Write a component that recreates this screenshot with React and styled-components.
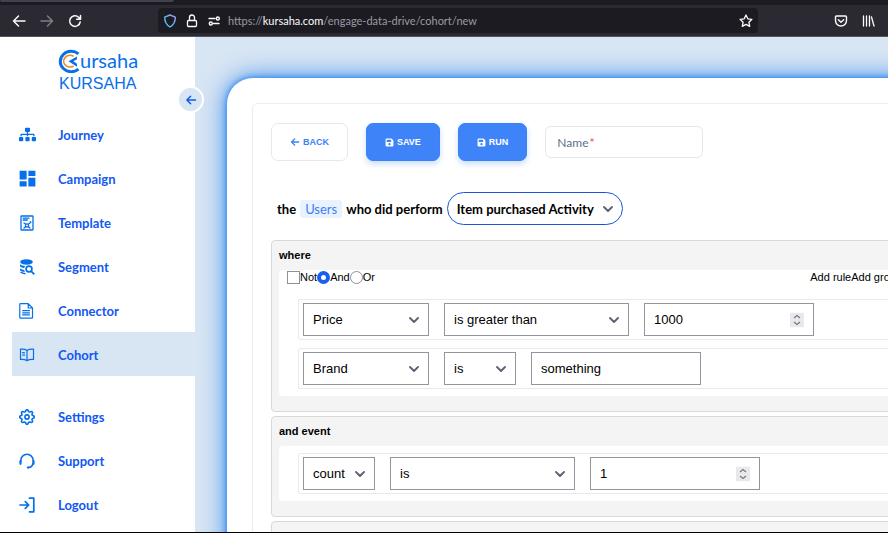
import React from "react";
import styled, { createGlobalStyle, css } from "styled-components";
import { FaSitemap, FaSave } from "react-icons/fa";
import { MdDashboard } from "react-icons/md";

const Global = createGlobalStyle`
  *, *::before, *::after { box-sizing: border-box; }
  body { margin: 0; background: #000; font-family: "Liberation Sans", Arial, sans-serif; }
  button, input, select { font: inherit; margin: 0; }
`;

const blue = "#0570ea";
const linkBlue = "#1258f2";

const Screen = styled.div`
  display: flex;
  flex-direction: column;
  height: 100vh;
  overflow: hidden;
  border-bottom: 1px solid #000;
`;

/* Browser chrome */
const TabStrip = styled.div`
  flex: none;
  height: 5px;
  background: #1c1b22;
`;
const ActiveTab = styled.div`
  width: 174px;
  height: 2px;
  border-radius: 0 0 3px 3px;
  background: #42414d;
`;
const Toolbar = styled.header`
  flex: none;
  display: flex;
  align-items: center;
  height: 32px;
  padding: 0 11px;
  background: #2b2a33;
  border-bottom: 1px solid #55545f;
  color: #fbfbfe;
`;
const ToolGroup = styled.div`
  display: flex;
  gap: 12px;
`;
const ToolButton = styled.button`
  display: flex;
  align-items: center;
  justify-content: center;
  width: 16px;
  height: 16px;
  padding: 0;
  border: 0;
  background: none;
  color: inherit;
  opacity: ${(p) => (p.disabled ? 0.4 : 1)};
`;
const NavGroup = styled(ToolGroup)`
  width: 147px;
`;
const AddressBar = styled.div`
  flex: 1;
  display: flex;
  align-items: center;
  gap: 6px;
  height: 25px;
  padding: 0 4px;
  border-radius: 4px;
  background: #1c1b22;
`;
const Address = styled.span`
  flex: 1;
  color: #9a9aa3;
  font: 11px/16px Lato, sans-serif;
  b { color: #fbfbfe; font-weight: 400; }
`;
const EndGroup = styled(ToolGroup)`
  justify-content: flex-end;
  width: 119px;
`;

/* App shell */
const Shell = styled.div`
  flex: 1;
  display: flex;
  min-height: 0;
  background: #d8e5f3;
`;
const Sidebar = styled.aside`
  position: relative;
  z-index: 1;
  flex: none;
  display: flex;
  flex-direction: column;
  width: 195px;
  padding: 11px 0 0 12px;
  background: #fff;
`;
const Brand = styled.div`
  display: flex;
  flex-direction: column;
  height: 64px;
  padding-left: 44px;
  color: ${blue};
`;
const Wordmark = styled.div`
  display: flex;
  align-items: center;
  height: 25px;
  font: 20px/25px Lato, sans-serif;
`;
const BrandName = styled.div`
  padding-left: 3px;
  font-size: 16px;
  line-height: 22px;
`;
const Collapse = styled.button`
  position: absolute;
  top: 49px;
  right: -9px;
  display: flex;
  align-items: center;
  justify-content: center;
  width: 27px;
  height: 27px;
  padding: 0;
  border: 2px solid #fff;
  border-radius: 50%;
  background: #d8e5f3;
  color: ${linkBlue};
`;
const Nav = styled.nav`
  display: flex;
  flex-direction: column;
`;
const NavLink = styled.a`
  display: flex;
  align-items: center;
  gap: 23px;
  height: 44px;
  padding: 1px 0 0 7px;
  background: ${(p) => (p.$active ? "#d8e5f3" : "transparent")};
  color: ${linkBlue};
  font: 700 13px/16px Lato, sans-serif;
  text-decoration: none;
  svg { flex: none; color: ${blue}; }
`;
const LowerNav = styled(Nav)`
  margin-top: 18px;
`;

/* Content */
const Main = styled.main`
  flex: 1;
  min-width: 0;
  overflow: hidden;
  padding: 41px 0 0 32px;
`;
const Card = styled.div`
  width: calc(100% + 75px);
  min-height: 100vh;
  padding: 25px;
  border-radius: 26px;
  background: #fff;
  box-shadow: 0 0 6px #1b7df0, 0 0 26px #2f86ee;
`;
const Panel = styled.div`
  min-height: 100vh;
  padding: 19px 18px;
  border: 1px solid #ededed;
  border-radius: 6px;
`;
const Actions = styled.div`
  display: flex;
  align-items: center;
  gap: 18px;
`;
const ActionButton = styled.button`
  display: flex;
  align-items: center;
  justify-content: center;
  gap: 3px;
  height: 38px;
  padding: 0 18px;
  border: 1px solid #3b82f6;
  border-radius: 7px;
  background: #3f83f8;
  color: #fff;
  font-size: 9px;
  font-weight: 700;
  box-shadow: 0 3px 6px #c9dcfb;
  ${(p) => p.$plain && css`
    border-color: #e6e8eb;
    background: #fff;
    color: #3b82f6;
    box-shadow: none;
  `}
`;
const NameField = styled.div`
  position: relative;
`;
const NameInput = styled.input`
  width: 158px;
  height: 32px;
  padding: 0 11px;
  border: 1px solid #e8e8e8;
  border-radius: 6px;
  background: #fff;
  font: 12px/16px Lato, sans-serif;
`;
const NameLabel = styled.label`
  position: absolute;
  top: 9px;
  left: 12px;
  color: #57738c;
  font: 12px/16px Lato, sans-serif;
  pointer-events: none;
  span { padding-left: 1px; color: #ef4444; }
`;
const Sentence = styled.div`
  display: flex;
  align-items: center;
  gap: 4px;
  margin: 31px 0 15px;
  padding-left: 6px;
  font: 700 13px/18px Lato, sans-serif;
`;
const Chip = styled.span`
  padding: 0 5px;
  border-radius: 3px;
  background: #e9f2fe;
  color: #3b82f6;
  font-weight: 400;
`;

const widths = { xs: 72, sm: 126, md: 170, pill: 176, lg: 185 };
const Field = styled.div`
  position: relative;
  width: ${(p) => widths[p.$size]}px;
  svg {
    position: absolute;
    top: 50%;
    right: ${(p) => p.$inset || 10}px;
    transform: translateY(-50%);
    pointer-events: none;
  }
`;
const controlBox = css`
  display: block;
  width: 100%;
  height: 33px;
  padding: 0 9px;
  border: 1px solid #9494a0;
  border-radius: 0;
  background: #fff;
  color: #000;
  font-size: 13px;
  appearance: none;
`;
const SelectBox = styled.select`
  ${controlBox}
  ${(p) => p.$pill && css`
    border-color: #1455dc;
    border-radius: 17px;
    font-weight: 700;
    font-family: Lato, sans-serif;
  `}
`;
const TextBox = styled.input`
  ${controlBox}
  appearance: textfield;
  &::-webkit-inner-spin-button { appearance: none; }
`;

const Groups = styled.div`
  display: flex;
  flex-direction: column;
  gap: 4px;
`;
const Group = styled.section`
  padding: 0 8px 15px 7px;
  border: 1px solid #d9d9d9;
  border-radius: 4px;
  background: #f4f4f4;
`;
const GroupTitle = styled.h2`
  margin: 0;
  font-size: 11px;
  line-height: 29px;
`;
const GroupBody = styled.div`
  display: flex;
  flex-direction: column;
  gap: 8px;
  padding: ${(p) => (p.$headed ? 0 : 7)}px 8px 7px;
  border-radius: 4px;
  background: #fff;
`;
const RuleHeader = styled.div`
  display: flex;
  justify-content: space-between;
  height: 14px;
  margin-bottom: 7px;
  font-size: 11px;
  line-height: 14px;
`;
const Combinators = styled.div`
  display: flex;
  align-items: center;
`;
const Tick = styled.input`
  appearance: none;
  width: 13px;
  height: 13px;
  border: 1px solid #8f8f9d;
  border-radius: ${(p) => (p.type === "radio" ? "50%" : "0")};
  background: #fff;
  &:checked { border: 4px solid #1a5ff0; }
`;
const TextButton = styled.button`
  padding: 0;
  border: 0;
  background: none;
  color: #000;
`;
const Rule = styled.div`
  display: flex;
  align-items: center;
  gap: 15px;
  height: 41px;
  margin-left: 11px;
  padding-left: 4px;
  border: 1px solid #e9e9e9;
  border-radius: 2px;
`;

const Line = ({ size = 16, width = 1.5, children, ...rest }) => (
  <svg width={size} height={size} viewBox="0 0 16 16" fill="none" stroke="currentColor"
    strokeWidth={width} strokeLinecap="round" strokeLinejoin="round" aria-hidden="true" {...rest}>
    {children}
  </svg>
);
const ArrowLeft = (p) => <Line {...p}><path d="M14 8H2.5M7.5 3 2.5 8l5 5" /></Line>;
const ArrowRight = (p) => <Line {...p}><path d="M2 8h11.5M8.5 3l5 5-5 5" /></Line>;
const Reload = () => <Line><path d="M13.2 9A5.3 5.3 0 1 1 11.6 4.2L13 5.6M13.5 2.4v3.8H9.7" /></Line>;
const Shield = () => (
  <Line width={1.4}>
    <defs>
      <linearGradient id="shield" x1="0" y1="1" x2="1" y2="0">
        <stop offset="0" stopColor="#3cc8f5" /><stop offset="1" stopColor="#9a9cf8" />
      </linearGradient>
    </defs>
    <path stroke="url(#shield)" d="M8 2 13.3 4.2C13.3 9 11.5 12 8 14 4.5 12 2.7 9 2.7 4.2Z" />
  </Line>
);
const Lock = () => <Line width={1.3}><rect x="3.5" y="7.5" width="9" height="6" rx="1" /><path d="M5.5 7V4.5a2.5 2.5 0 0 1 5 0V7" /></Line>;
const Permissions = () => <Line width={1.4}><path d="M3 5.5h6M7.5 10.5H13" /><circle cx="11.8" cy="5.5" r="1.5" /><circle cx="4.8" cy="10.5" r="1.5" /></Line>;
const Star = () => <Line width={1.3}><path d="m8 2 1.8 3.8 4.1.5-3 2.9.8 4.2L8 11.4l-3.7 2 .8-4.2-3-2.9 4.1-.5Z" /></Line>;
const Pocket = () => <Line width={1.4}><path d="M3.5 3h9c.7 0 1 .4 1 1v3.5a5.5 5.5 0 0 1-11 0V4c0-.6.3-1 1-1ZM5.3 6.8 8 9.3l2.7-2.5" /></Line>;
const Library = () => <Line width={1.3}><path d="M2.5 3v10M5.5 3v10M8.5 3v10M10.5 4l2.5 9" /></Line>;

const TemplateIcon = () => (
  <Line width={1.3} viewBox="0 0 14 16">
    <rect x="1" y="1" width="12" height="14" rx=".5" />
    <path d="M3.2 3.2H9M3.2 5h4.2M4 8l1.6 1M10 8 8.5 9M4 13l1.6-1.3M10 13l-1.5-1.3M10.3 6.8l.6.6" />
    <circle cx="7" cy="10.4" r="1.6" />
  </Line>
);
const SegmentIcon = () => (
  <svg width="16" height="16" viewBox="0 0 16 16" aria-hidden="true">
    <ellipse cx="7.5" cy="3" rx="6.3" ry="2.7" fill="currentColor" />
    <path d="M1 5.3c1.2 1.3 3 1.6 5.3 1.7-.7.8-1 1.3-1.1 2C3 8.8 1.3 8 1 7.2ZM1 9.3c1 1 2.4 1.4 4.1 1.6.1.8.4 1.3.9 2C3.2 12.8 1.2 12 1 11Z" fill="currentColor" />
    <path d="M1.5 13c1.4 1.1 2.9 1.6 5 1.7" stroke="currentColor" strokeWidth="1.5" fill="none" />
    <circle cx="10" cy="10" r="2.9" stroke="currentColor" strokeWidth="1.7" fill="none" />
    <path d="m12.3 12.3 3 3" stroke="currentColor" strokeWidth="1.8" />
  </svg>
);
const ConnectorIcon = () => <Line width={1.2}><path d="M1.7.7h7.5L13.500 5v9.700c0 .3-.2.5-.5.5H1.500c-.4 0-.7-.2-.7-.6V1.300c0-.4.400-.6.900-.6ZM9.200.9V5h4.100M3.700 7.700h6.800M3.700 9.800h6.800M3.700 11.900h6.800" /></Line>;
const CohortIcon = () => <Line width={1.2}><path d="M8 3.5C6.2 2.1 3.8 2 1.5 2.2v10.3c2.5-.2 4.7 0 6.5 1.2 1.8-1.2 4-1.4 6.5-1.2V2.2C12.2 2 9.8 2.1 8 3.5Zm0 0v10M3.5 5.6l2 .2M3.5 8l2 .2" /></Line>;
const gearTeeth = Array.from({ length: 64 }, (_, i) => {
  const a = (i / 64) * Math.PI * 2;
  const r = 6.4 + 0.9 * Math.tanh(2 * Math.cos(a * 8));
  return `${(8 + r * Math.sin(a)).toFixed(2)} ${(8 - r * Math.cos(a)).toFixed(2)}`;
});
const SettingsIcon = () => <Line width={1.6}><path d={`M${gearTeeth.join("L")}Z`} /><circle cx="8" cy="8" r="2.1" /></Line>;
const SupportIcon = () => (
  <Line width={1.5}>
    <path d="M1.8 8.5v-1a6.2 6.2 0 0 1 12.4 0v1M13.9 10.5c-.4 2.2-2 4-4.6 4.1" />
    <path d="M1.5 8v2.8M14.5 8v2.8" strokeWidth="2.2" /><path d="M8.8 14.6h.8" strokeWidth="2" />
  </Line>
);
const LogoutIcon = () => <Line width={1.7}><path d="M1 8h8.5M6.3 4.6 9.7 8l-3.4 3.4M10.5 1.2h4.3v13.6h-4.3" /></Line>;

const Logo = () => (
  <svg width="24" height="24" viewBox="0 0 24 24" fill="none" aria-hidden="true">
    <path d="M22.5 4.8A11 10.2 0 1 0 22.5 20.2" stroke={blue} strokeWidth="3" />
    <path d="M17.5 7.3A6.3 5.8 0 1 0 17.5 17" stroke="#f08a24" strokeWidth="1.6" />
    <path d="M21 7.5 12.5 12.3 21 17.8V14.8L17.4 12.3 21 10.2Z" fill={blue} />
  </svg>
);
const Chevron = () => (
  <svg width="10" height="6" viewBox="0 0 10 6" fill="none" stroke="#5b6072" strokeWidth="1.8" strokeLinecap="round" strokeLinejoin="round" aria-hidden="true">
    <path d="m1 1 4 4 4-4" />
  </svg>
);
const Spinner = () => (
  <svg width="14" height="15" viewBox="0 0 14 15" fill="none" stroke="#77777f" strokeWidth="1.2" aria-hidden="true">
    <path d="M0 0h14v15H0Z" fill="#e9e9ed" stroke="none" />
    <path d="m4 5.5 3-2.500 3 2.500M4 9.500 7 12l3-2.500" />
  </svg>
);

const Select = ({ label, value, size, pill }) => (
  <Field $size={size}>
    <SelectBox aria-label={label} defaultValue={value} $pill={pill}>
      <option>{value}</option>
    </SelectBox>
    <Chevron />
  </Field>
);
const ValueInput = ({ type = "text", value }) => (
  <Field $size="md" $inset={10}>
    <TextBox type={type} aria-label="Value" defaultValue={value} />
    {type === "number" && <Spinner />}
  </Field>
);

const navItems = [
  ["Journey", () => <FaSitemap size={17} />],
  ["Campaign", () => <MdDashboard size={21} />],
  ["Template", TemplateIcon],
  ["Segment", SegmentIcon],
  ["Connector", ConnectorIcon],
  ["Cohort", CohortIcon],
];
const lowerItems = [
  ["Settings", SettingsIcon],
  ["Support", SupportIcon],
  ["Logout", LogoutIcon],
];
const IconSlot = styled.span`
  display: flex;
  align-items: center;
  justify-content: center;
  width: 16px;
`;
const renderItem = ([label, Icon]) => (
  <NavLink key={label} href="#" $active={label === "Cohort"}>
    <IconSlot><Icon /></IconSlot>
    {label}
  </NavLink>
);

export default function App() {
  return (
    <Screen>
      <Global />
      <TabStrip><ActiveTab /></TabStrip>
      <Toolbar>
        <NavGroup>
          <ToolButton aria-label="Back"><ArrowLeft /></ToolButton>
          <ToolButton aria-label="Forward" disabled><ArrowRight /></ToolButton>
          <ToolButton aria-label="Reload"><Reload /></ToolButton>
        </NavGroup>
        <AddressBar>
          <Shield /><Lock /><Permissions />
          <Address>https://<b>kursaha.com</b>/engage-data-drive/cohort/new</Address>
          <ToolButton aria-label="Bookmark"><Star /></ToolButton>
        </AddressBar>
        <EndGroup>
          <ToolButton aria-label="Save to Pocket"><Pocket /></ToolButton>
          <ToolButton aria-label="Library"><Library /></ToolButton>
        </EndGroup>
      </Toolbar>
      <Shell>
        <Sidebar>
          <Brand>
            <Wordmark><Logo />ursaha</Wordmark>
            <BrandName>KURSAHA</BrandName>
          </Brand>
          <Collapse aria-label="Collapse sidebar"><ArrowLeft size={12} width={2} /></Collapse>
          <Nav>{navItems.map(renderItem)}</Nav>
          <LowerNav>{lowerItems.map(renderItem)}</LowerNav>
        </Sidebar>
        <Main>
          <Card>
            <Panel>
              <Actions>
                <ActionButton $plain><ArrowLeft size={10} width={2.2} />BACK</ActionButton>
                <ActionButton><FaSave size={9} />SAVE</ActionButton>
                <ActionButton><FaSave size={9} />RUN</ActionButton>
                <NameField>
                  <NameInput id="name" required />
                  <NameLabel htmlFor="name">Name<span>*</span></NameLabel>
                </NameField>
              </Actions>
              <Sentence>
                the <Chip>Users</Chip> who did perform
                <Select label="Activity" value="Item purchased Activity" size="pill" pill />
              </Sentence>
              <Groups>
                <Group>
                  <GroupTitle>where</GroupTitle>
                  <GroupBody $headed>
                    <RuleHeader>
                      <Combinators>
                        <Tick type="checkbox" id="not" /><label htmlFor="not">Not</label>
                        <Tick type="radio" name="join" id="and" defaultChecked /><label htmlFor="and">And</label>
                        <Tick type="radio" name="join" id="or" /><label htmlFor="or">Or</label>
                      </Combinators>
                      <Combinators>
                        <TextButton>Add rule</TextButton>
                        <TextButton>Add group</TextButton>
                      </Combinators>
                    </RuleHeader>
                    <Rule>
                      <Select label="Field" value="Price" size="sm" />
                      <Select label="Operator" value="is greater than" size="lg" />
                      <ValueInput type="number" value="1000" />
                    </Rule>
                    <Rule>
                      <Select label="Field" value="Brand" size="sm" />
                      <Select label="Operator" value="is" size="xs" />
                      <ValueInput value="something" />
                    </Rule>
                  </GroupBody>
                </Group>
                <Group>
                  <GroupTitle>and event</GroupTitle>
                  <GroupBody>
                    <Rule>
                      <Select label="Field" value="count" size="xs" />
                      <Select label="Operator" value="is" size="lg" />
                      <ValueInput type="number" value="1" />
                    </Rule>
                  </GroupBody>
                </Group>
                <Group />
              </Groups>
            </Panel>
          </Card>
        </Main>
      </Shell>
    </Screen>
  );
}
